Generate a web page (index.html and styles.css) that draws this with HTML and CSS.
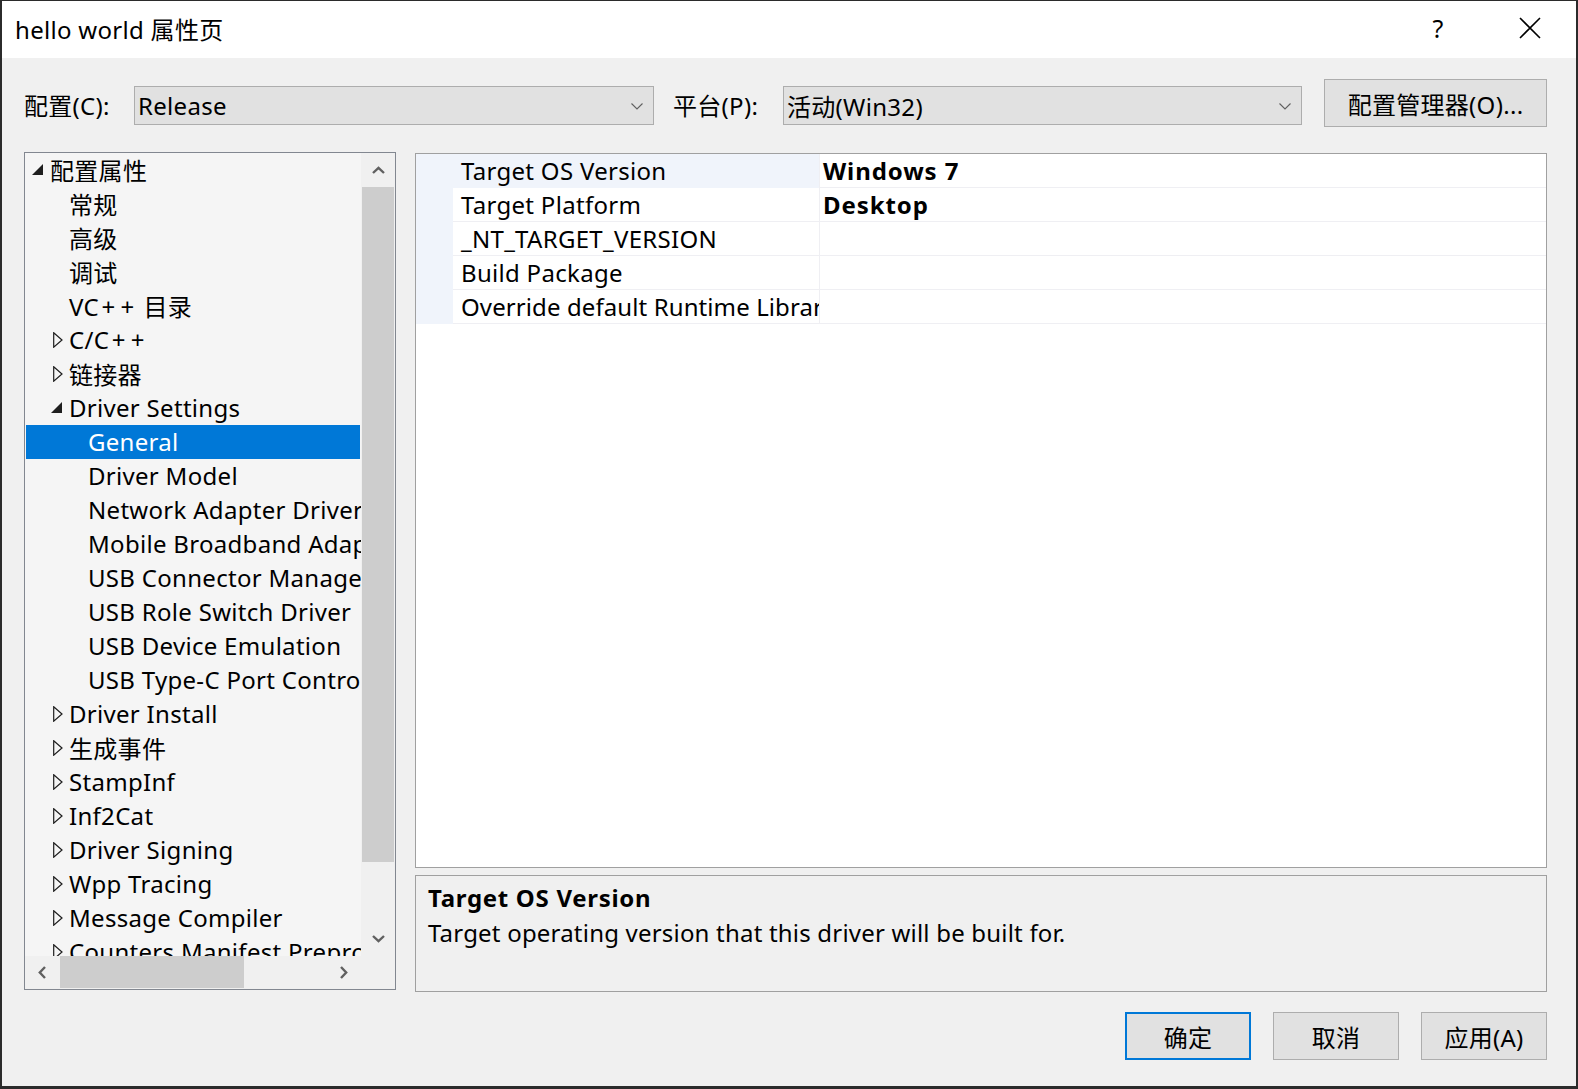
FILE: index.html
```html
<!DOCTYPE html>
<html lang="zh-CN">
<head>
<meta charset="utf-8">
<title>hello world 属性页</title>
<link rel="stylesheet" href="styles.css">
</head>
<body>
<div class="window">
  <div class="titlebar">
    <span class="title">hello world 属性页</span>
    <span class="tb-btn help">?</span>
    <span class="tb-btn close"><svg width="22" height="22" viewBox="0 0 22 22"><path d="M1 1 L21 21 M21 1 L1 21" stroke="#000" stroke-width="1.6" fill="none"/></svg></span>
  </div>
  <div class="body">
    <div class="toolbar">
      <span class="lbl">配置(C):</span>
      <div class="combo combo-config"><span class="combo-text">Release</span><svg class="combo-arrow" width="12" height="7" viewBox="0 0 12 7"><path d="M0.5 0.5 L6 6 L11.5 0.5" stroke="#606060" stroke-width="1.1" fill="none"/></svg></div>
      <span class="lbl lbl-platform">平台(P):</span>
      <div class="combo combo-platform"><span class="combo-text">活动(Win32)</span><svg class="combo-arrow" width="12" height="7" viewBox="0 0 12 7"><path d="M0.5 0.5 L6 6 L11.5 0.5" stroke="#606060" stroke-width="1.1" fill="none"/></svg></div>
      <button class="btn btn-manager">配置管理器(O)...</button>
    </div>
    <div class="main">
      <div class="tree">
        <div class="tree-list">
          <div class="row l0"><span class="tog"><svg class="exp" width="11" height="11" viewBox="0 0 11 11"><path d="M11 0 L11 11 L0 11 Z" fill="#1e1e1e"/></svg></span><span class="txt">配置属性</span></div>
          <div class="row l1"><span class="tog"></span><span class="txt">常规</span></div>
          <div class="row l1"><span class="tog"></span><span class="txt">高级</span></div>
          <div class="row l1"><span class="tog"></span><span class="txt">调试</span></div>
          <div class="row l1"><span class="tog"></span><span class="txt">VC<span class="pl">+</span><span class="pl">+</span> 目录</span></div>
          <div class="row l1"><span class="tog"><svg class="col" width="10" height="16" viewBox="0 0 10 16"><path d="M0.7 0.8 L9 8 L0.7 15.2 Z" fill="none" stroke="#1e1e1e" stroke-width="1.2"/></svg></span><span class="txt">C/C<span class="pl">+</span><span class="pl">+</span></span></div>
          <div class="row l1"><span class="tog"><svg class="col" width="10" height="16" viewBox="0 0 10 16"><path d="M0.7 0.8 L9 8 L0.7 15.2 Z" fill="none" stroke="#1e1e1e" stroke-width="1.2"/></svg></span><span class="txt">链接器</span></div>
          <div class="row l1"><span class="tog"><svg class="exp" width="11" height="11" viewBox="0 0 11 11"><path d="M11 0 L11 11 L0 11 Z" fill="#1e1e1e"/></svg></span><span class="txt">Driver Settings</span></div>
          <div class="row l2 selected"><span class="tog"></span><span class="txt">General</span></div>
          <div class="row l2"><span class="tog"></span><span class="txt">Driver Model</span></div>
          <div class="row l2"><span class="tog"></span><span class="txt">Network Adapter Driver</span></div>
          <div class="row l2"><span class="tog"></span><span class="txt">Mobile Broadband Adapter</span></div>
          <div class="row l2"><span class="tog"></span><span class="txt">USB Connector Manager</span></div>
          <div class="row l2"><span class="tog"></span><span class="txt">USB Role Switch Driver</span></div>
          <div class="row l2"><span class="tog"></span><span class="txt">USB Device Emulation</span></div>
          <div class="row l2"><span class="tog"></span><span class="txt">USB Type-C Port Controller</span></div>
          <div class="row l1"><span class="tog"><svg class="col" width="10" height="16" viewBox="0 0 10 16"><path d="M0.7 0.8 L9 8 L0.7 15.2 Z" fill="none" stroke="#1e1e1e" stroke-width="1.2"/></svg></span><span class="txt">Driver Install</span></div>
          <div class="row l1"><span class="tog"><svg class="col" width="10" height="16" viewBox="0 0 10 16"><path d="M0.7 0.8 L9 8 L0.7 15.2 Z" fill="none" stroke="#1e1e1e" stroke-width="1.2"/></svg></span><span class="txt">生成事件</span></div>
          <div class="row l1"><span class="tog"><svg class="col" width="10" height="16" viewBox="0 0 10 16"><path d="M0.7 0.8 L9 8 L0.7 15.2 Z" fill="none" stroke="#1e1e1e" stroke-width="1.2"/></svg></span><span class="txt">StampInf</span></div>
          <div class="row l1"><span class="tog"><svg class="col" width="10" height="16" viewBox="0 0 10 16"><path d="M0.7 0.8 L9 8 L0.7 15.2 Z" fill="none" stroke="#1e1e1e" stroke-width="1.2"/></svg></span><span class="txt">Inf2Cat</span></div>
          <div class="row l1"><span class="tog"><svg class="col" width="10" height="16" viewBox="0 0 10 16"><path d="M0.7 0.8 L9 8 L0.7 15.2 Z" fill="none" stroke="#1e1e1e" stroke-width="1.2"/></svg></span><span class="txt">Driver Signing</span></div>
          <div class="row l1"><span class="tog"><svg class="col" width="10" height="16" viewBox="0 0 10 16"><path d="M0.7 0.8 L9 8 L0.7 15.2 Z" fill="none" stroke="#1e1e1e" stroke-width="1.2"/></svg></span><span class="txt">Wpp Tracing</span></div>
          <div class="row l1"><span class="tog"><svg class="col" width="10" height="16" viewBox="0 0 10 16"><path d="M0.7 0.8 L9 8 L0.7 15.2 Z" fill="none" stroke="#1e1e1e" stroke-width="1.2"/></svg></span><span class="txt">Message Compiler</span></div>
          <div class="row l1"><span class="tog"><svg class="col" width="10" height="16" viewBox="0 0 10 16"><path d="M0.7 0.8 L9 8 L0.7 15.2 Z" fill="none" stroke="#1e1e1e" stroke-width="1.2"/></svg></span><span class="txt">Counters Manifest Preprocessor</span></div>
        </div>
        <div class="vscroll">
          <div class="sb-btn"><svg width="13" height="8" viewBox="0 0 13 8"><path d="M1 7 L6.5 1.8 L12 7" fill="none" stroke="#606060" stroke-width="2.4"/></svg></div>
          <div class="vthumb"></div>
          <div class="sb-fill"></div>
          <div class="sb-btn"><svg width="13" height="8" viewBox="0 0 13 8"><path d="M1 1 L6.5 6.2 L12 1" fill="none" stroke="#606060" stroke-width="2.4"/></svg></div>
        </div>
        <div class="hscroll">
          <div class="sb-btn"><svg width="8" height="13" viewBox="0 0 8 13"><path d="M7 1 L1.8 6.5 L7 12" fill="none" stroke="#606060" stroke-width="2.4"/></svg></div>
          <div class="hthumb"></div>
          <div class="sb-fill"></div>
          <div class="sb-btn"><svg width="8" height="13" viewBox="0 0 8 13"><path d="M1 1 L6.2 6.5 L1 12" fill="none" stroke="#606060" stroke-width="2.4"/></svg></div>
        </div>
        <div class="corner"></div>
      </div>
      <div class="right">
        <div class="grid">
          <div class="prow first"><span class="gut"></span><span class="pname">Target OS Version</span><span class="pval">Windows 7</span></div>
          <div class="prow"><span class="gut"></span><span class="pname">Target Platform</span><span class="pval">Desktop</span></div>
          <div class="prow"><span class="gut"></span><span class="pname">_NT_TARGET_VERSION</span><span class="pval"></span></div>
          <div class="prow"><span class="gut"></span><span class="pname">Build Package</span><span class="pval"></span></div>
          <div class="prow"><span class="gut"></span><span class="pname pname-long">Override default Runtime Library</span><span class="pval"></span></div>
        </div>
        <div class="desc">
          <div class="desc-title">Target OS Version</div>
          <div class="desc-text">Target operating version that this driver will be built for.</div>
        </div>
      </div>
    </div>
    <div class="footer">
      <button class="btn btn-default">确定</button>
      <button class="btn">取消</button>
      <button class="btn">应用(A)</button>
    </div>
  </div>
</div>
</body>
</html>
```

FILE: styles.css
```css
* { box-sizing: border-box; }
html, body { margin: 0; padding: 0; }
body {
  width: 1578px;
  height: 1089px;
  overflow: hidden;
  background: #2b2b2b;
  font-family: "Noto Sans", "Noto Sans CJK SC", sans-serif;
  font-size: 24px;
  letter-spacing: 0.3px;
  color: #000;
}
.window {
  width: 1578px;
  height: 1089px;
  border-style: solid;
  border-color: #2b2b2b;
  border-width: 1px 2px 3px 2px;
  display: flex;
  flex-direction: column;
}
.titlebar {
  flex: none;
  height: 57px;
  background: #fff;
  display: flex;
  align-items: center;
  padding-left: 13px;
  padding-bottom: 3px;
}
.title { flex: 1; white-space: nowrap; }
.tb-btn {
  width: 92px;
  height: 54px;
  display: flex;
  align-items: center;
  justify-content: center;
}
.help { font-size: 25px; }
.body {
  flex: 1;
  background: #f0f0f0;
  display: flex;
  flex-direction: column;
}
.toolbar {
  margin-top: 21px;
  height: 48px;
  display: flex;
  align-items: flex-start;
  padding-left: 22px;
  white-space: nowrap;
}
.lbl {
  width: 110px;
  flex: none;
  height: 39px;
  margin-top: 7px;
  line-height: 39px;
}
.lbl-platform { margin-left: 19px; }
.combo {
  height: 39px;
  margin-top: 7px;
  border: 1px solid #adadad;
  background: #e1e1e1;
  display: flex;
  align-items: center;
  padding-left: 3px;
  flex: none;
}
.combo-config { width: 520px; }
.combo-platform { width: 519px; }
.combo-text { flex: 1; }
.combo-arrow { margin-right: 10px; margin-top: 1px; }
.btn {
  font-family: inherit;
  font-size: 24px;
  letter-spacing: 0.3px;
  color: #000;
  background: #e1e1e1;
  border: 1px solid #adadad;
  width: 126px;
  height: 48px;
  padding: 0;
  white-space: nowrap;
}
.btn-manager { width: 223px; margin-left: 22px; }
.btn-default { border: 2px solid #0078d7; }
.main {
  margin-top: 25px;
  display: flex;
  align-items: flex-start;
  padding-left: 22px;
}
.tree {
  width: 372px;
  height: 838px;
  border: 1px solid #828790;
  background: #f5f5f5;
  display: grid;
  grid-template-columns: 336px 34px;
  grid-template-rows: 803px 33px;
}
.tree-list {
  overflow: hidden;
  white-space: nowrap;
}
.row {
  height: 34px;
  display: flex;
  align-items: center;
  color: #000;
}
.row .txt { margin-top: -2px; }
.pl { padding: 0 2.5px; }
.row.l0 { padding-left: 6px; }
.row.l1 { padding-left: 25px; }
.row.l2 { padding-left: 44px; }
.row.selected {
  background: #0078d7;
  color: #fff;
  margin: 0 1px;
  padding-left: 43px;
}
.tog {
  width: 19px;
  height: 34px;
  flex: none;
  position: relative;
}
.tog .exp { position: absolute; left: 1px; top: 11px; }
.tog .col { position: absolute; left: 3px; top: 9px; }
.vscroll {
  background: #f0f0f0;
  display: flex;
  flex-direction: column;
}
.sb-btn {
  width: 34px;
  height: 34px;
  flex: none;
  display: flex;
  align-items: center;
  justify-content: center;
}
.vthumb {
  height: 675px;
  margin: 0 1px;
  background: #cdcdcd;
  flex: none;
}
.sb-fill { flex: 1; }
.hscroll {
  background: #f0f0f0;
  display: flex;
}
.hscroll .sb-btn { height: 33px; }
.hthumb {
  width: 184px;
  height: 32px;
  margin-left: 1px;
  background: #cdcdcd;
  flex: none;
}
.corner { background: #f0f0f0; }
.right {
  width: 1132px;
  margin-left: 19px;
  margin-top: 1px;
  display: flex;
  flex-direction: column;
}
.grid {
  height: 715px;
  border: 1px solid #a0a0a0;
  background: #fff;
}
.prow {
  height: 34px;
  display: grid;
  grid-template-columns: 37px 366px 1fr;
}
.gut { background: #f0f4fb; }
.pname {
  padding-left: 8px;
  border-bottom: 1px solid #efeff3;
  overflow: hidden;
  white-space: nowrap;
  line-height: 33px;
}
.pname-long { letter-spacing: 0.1px; }
.prow.first .pname { background: #f0f4fb; border-bottom-color: #f0f4fb; }
.pval {
  border-left: 1px solid #efeff3;
  border-bottom: 1px solid #efeff3;
  padding-left: 3px;
  font-weight: bold;
  letter-spacing: 0.9px;
  line-height: 33px;
  white-space: nowrap;
}
.desc {
  margin-top: 7px;
  height: 117px;
  border: 1px solid #a0a0a0;
  background: #f0f0f0;
  padding: 5px 12px 0 12px;
  line-height: 34px;
}
.desc-title { font-weight: bold; letter-spacing: 0.7px; }
.desc-text { margin-top: 1px; letter-spacing: 0.2px; }
.footer {
  margin-top: 20px;
  display: flex;
  justify-content: flex-end;
  gap: 22px;
  padding-right: 29px;
}
```
